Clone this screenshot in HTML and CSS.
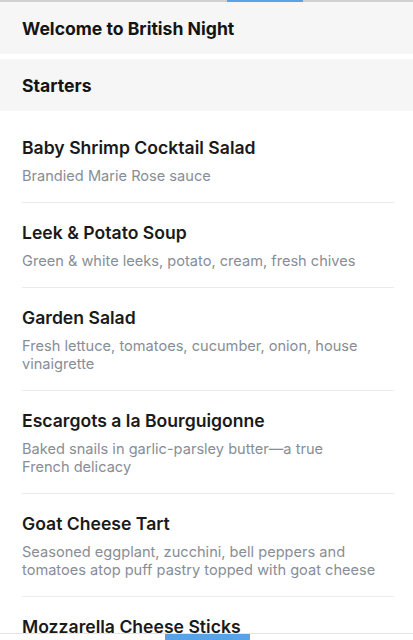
FILE: index.html
```html
<!DOCTYPE html>
<html>
<head>
<meta charset="utf-8">
<link rel="stylesheet" href="styles.css">
</head>
<body>
<div class="topbar"><div class="topbar-ind"></div></div>
<div class="section-head">Welcome to British Night</div>
<div class="section-head second">Starters</div>
<ul class="menu">
  <li class="item first">
    <div class="title">Baby Shrimp Cocktail Salad</div>
    <div class="desc">Brandied Marie Rose sauce</div>
  </li>
  <li class="item">
    <div class="title">Leek &amp; Potato Soup</div>
    <div class="desc">Green &amp; white leeks, potato, cream, fresh chives</div>
  </li>
  <li class="item">
    <div class="title">Garden Salad</div>
    <div class="desc">Fresh lettuce, tomatoes, cucumber, onion, house vinaigrette</div>
  </li>
  <li class="item">
    <div class="title">Escargots a la Bourguigonne</div>
    <div class="desc">Baked snails in garlic-parsley butter—a true<br>French delicacy</div>
  </li>
  <li class="item">
    <div class="title">Goat Cheese Tart</div>
    <div class="desc">Seasoned eggplant, zucchini, bell peppers and tomatoes atop puff pastry topped with goat cheese</div>
  </li>
  <li class="item last">
    <div class="title">Mozzarella Cheese Sticks</div>
  </li>
</ul>
<div class="bottombar"><div class="bottombar-ind"></div></div>
</body>
</html>
```
FILE: styles.css
```css
html, body {
  margin: 0;
  padding: 0;
  background: #ffffff;
  font-family: "Inter", "Lato", sans-serif;
  overflow: hidden;
}
body {
  width: 413px;
  height: 640px;
}
.topbar {
  height: 2px;
  background: #d0d0d0;
  position: relative;
}
.topbar-ind {
  position: absolute;
  left: 227px;
  width: 76px;
  top: 0;
  height: 2px;
  background: #5aa2e6;
}
.section-head {
  box-sizing: border-box;
  height: 52px;
  display: flex;
  align-items: center;
  padding: 0 22px;
  background: #f6f6f6;
  font-size: 17.6px;
  font-weight: 700;
  color: #141414;
}
.section-head.second {
  margin-top: 5px;
}
.menu {
  list-style: none;
  margin: 0;
  padding: 7px 19px 0 22px;
}
.item {
  padding: 19px 0 17px;
  border-bottom: 1px solid #ececec;
}
.item.last {
  border-bottom: none;
}
.title {
  font-size: 17.6px;
  line-height: 22px;
  font-weight: 600;
  color: #1a1a1a;
  margin-bottom: 8px;
}
.desc {
  font-size: 14.6px;
  line-height: 18px;
  color: #878d96;
  padding-right: 10px;
}
.bottombar {
  position: fixed;
  left: 0;
  right: 0;
  bottom: 0;
  height: 6px;
  background: #ffffff;
  border-top: 1px solid #e4e4e4;
}
.bottombar-ind {
  position: absolute;
  left: 165px;
  width: 85px;
  top: 0;
  bottom: 0;
  background: #5aa2e6;
}
```
